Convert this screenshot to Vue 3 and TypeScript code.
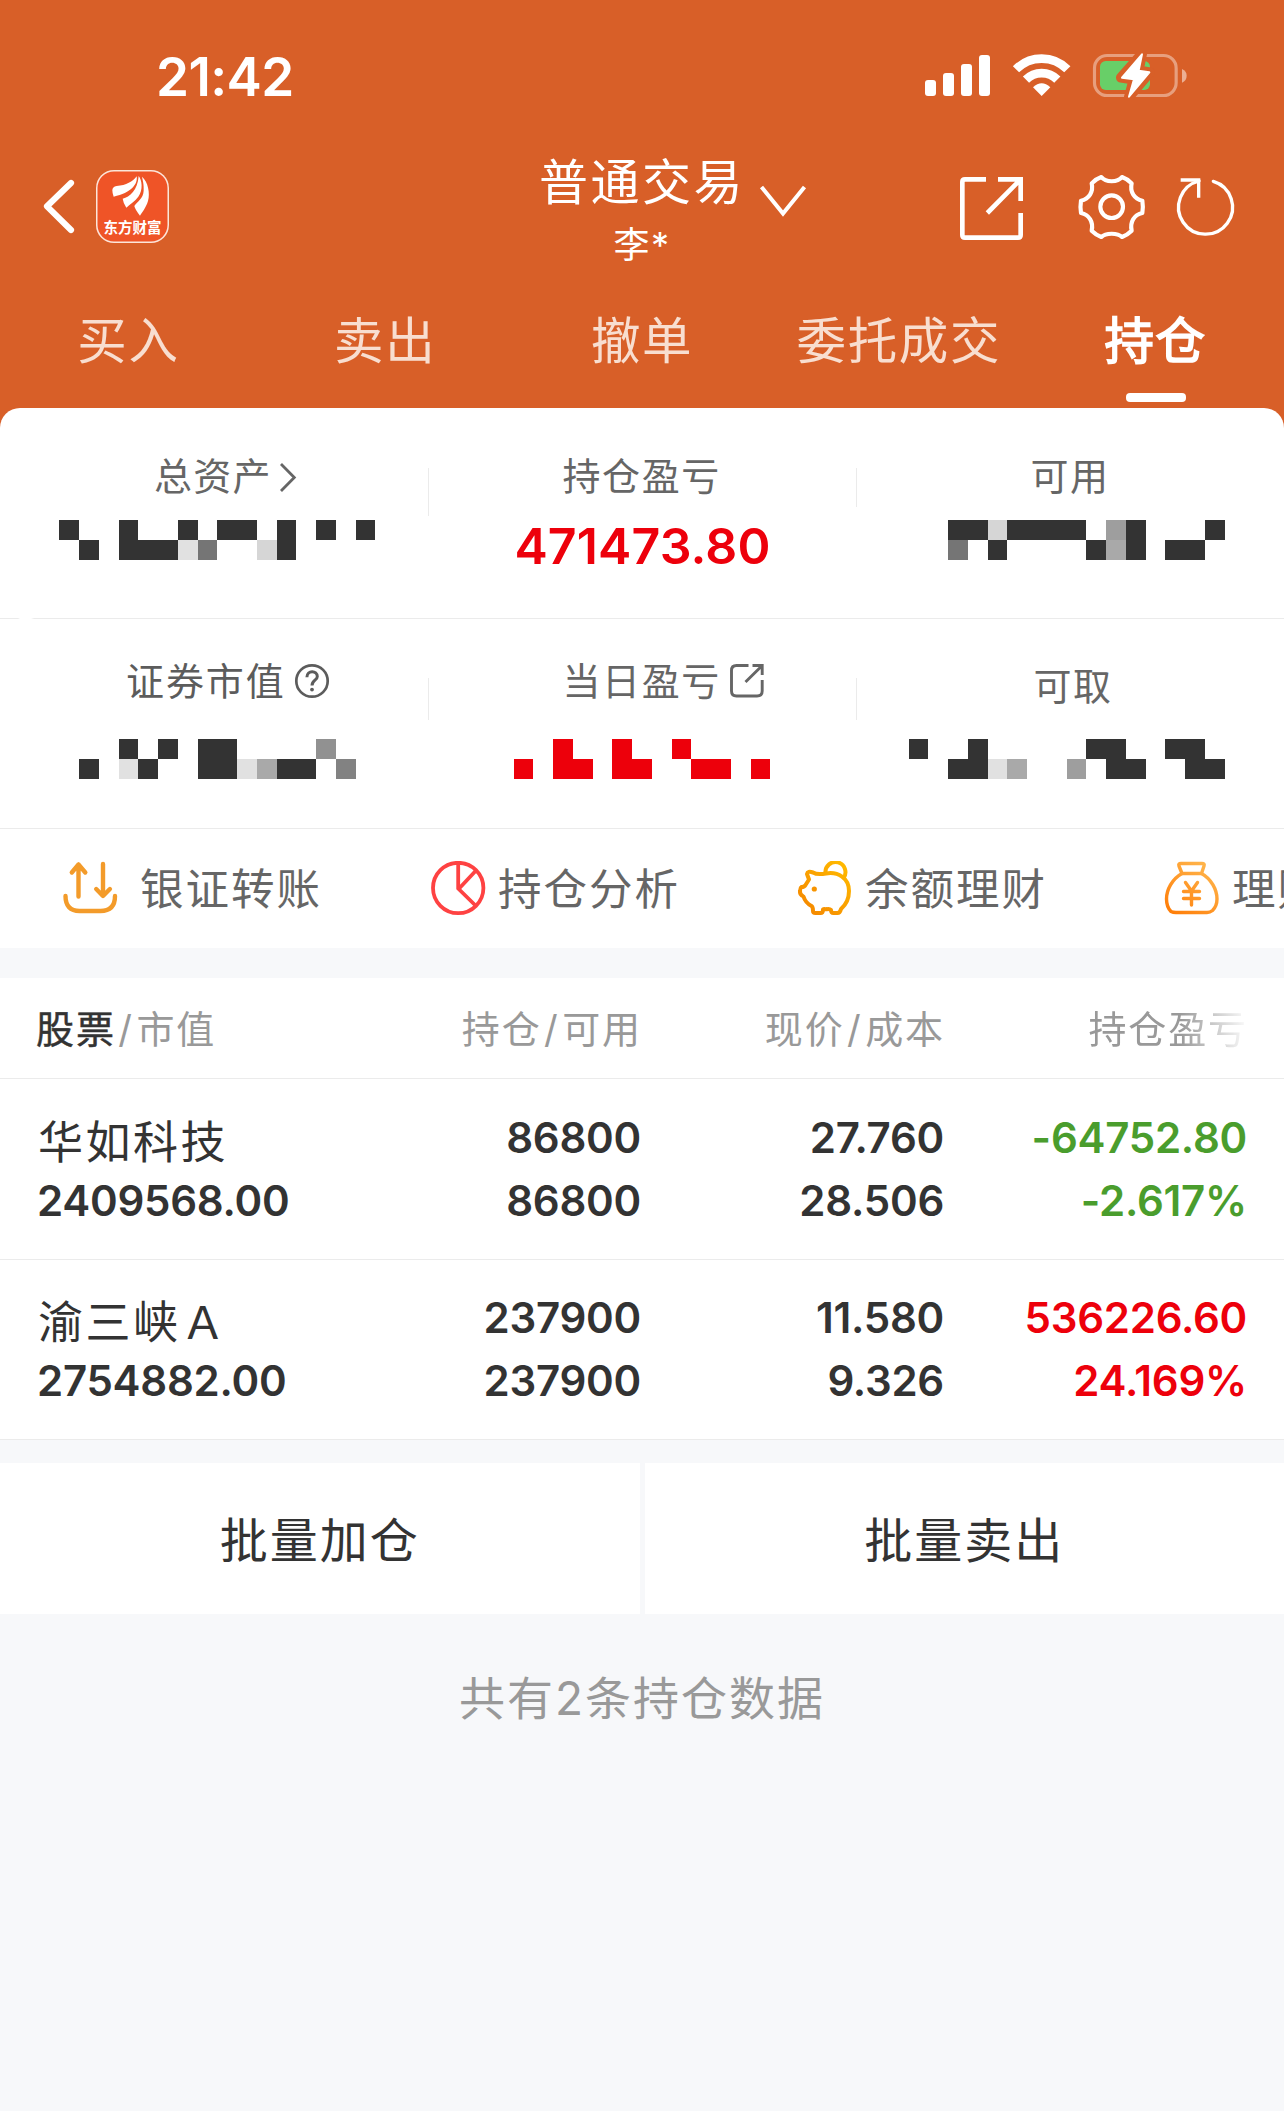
<script setup lang="ts">
type Block = [col: number, span: number, color?: string]
interface Mosaic {
  origin: number
  top: Block[]
  bottom: Block[]
}
interface Holding {
  name: string
  value: string
  qty: string
  usable: string
  price: string
  cost: string
  profit: string
  rate: string
  trend: 'up' | 'down'
}

const STEP = 19.753
const DARK = '#333333'
const RED = '#ed000b'

const tabs: string[] = ['买入', '卖出', '撤单', '委托成交', '持仓']
const activeTab = '持仓'

const totalAssets: Mosaic = {
  origin: 0,
  top: [[3, 1], [6, 1], [9, 1], [11, 2], [14, 1], [16, 1], [18, 1]],
  bottom: [[4, 1], [6, 3], [9, 1, '#e1e1e1'], [10, 1, '#757575'], [13, 1, '#d6d6d6'], [14, 1]],
}
const available: Mosaic = {
  origin: 857,
  top: [[48, 2], [50, 1, '#d6d6d6'], [51, 4], [56, 1, '#9e9e9e'], [57, 1], [61, 1]],
  bottom: [[48, 1, '#757575'], [50, 1], [55, 1], [56, 1, '#a9a9a9'], [57, 1], [59, 2]],
}
const marketValue: Mosaic = {
  origin: 0,
  top: [[6, 1], [8, 1], [10, 2], [16, 1, '#919191']],
  bottom: [[4, 1], [6, 1, '#e1e1e1'], [7, 1], [10, 2], [12, 1, '#e1e1e1'], [13, 1, '#a9a9a9'], [14, 2], [17, 1, '#828282']],
}
const dayProfit: Mosaic = {
  origin: 429,
  top: [[28, 1, RED], [31, 1, RED], [34, 1, RED]],
  bottom: [[26, 1, RED], [28, 2, RED], [31, 2, RED], [35, 2, RED], [38, 1, RED]],
}
const withdrawable: Mosaic = {
  origin: 857,
  top: [[46, 1], [49, 1], [55, 2], [59, 2]],
  bottom: [[48, 2], [50, 1, '#e1e1e1'], [51, 1, '#a9a9a9'], [54, 1, '#9e9e9e'], [56, 2], [60, 2]],
}

function rects(m: Mosaic) {
  const place = (list: Block[], y: number) =>
    list.map(([col, span, color]) => {
      const x = Math.round(col * STEP)
      return { x: x - m.origin, y, w: Math.round((col + span) * STEP) - x, fill: color ?? DARK }
    })
  return [...place(m.top, 0), ...place(m.bottom, 20)]
}

const holdings: Holding[] = [
  { name: '华如科技', value: '2409568.00', qty: '86800', usable: '86800', price: '27.760', cost: '28.506', profit: '-64752.80', rate: '-2.617%', trend: 'down' },
  { name: '渝三峡Ａ', value: '2754882.00', qty: '237900', usable: '237900', price: '11.580', cost: '9.326', profit: '536226.60', rate: '24.169%', trend: 'up' },
]
</script>

<template>
  <div class="app">
    <header class="header">
      <div class="status">
        <span class="time">21:42</span>
        <svg class="status-icons" viewBox="189 63 800 147" width="266.67" height="49">
          <g fill="#fff">
            <rect x="195" y="150" width="33" height="48" rx="9" />
            <rect x="249" y="129" width="33" height="69" rx="9" />
            <rect x="303" y="102" width="33" height="96" rx="9" />
            <rect x="357" y="75" width="33" height="123" rx="9" />
            <path d="M545 198 L519 172 Q545 147 571 172 Z" />
          </g>
          <g fill="none" stroke="#fff" stroke-width="26">
            <path d="M468 118 A108 108 0 0 1 622 118" />
            <path d="M498 149 A66 66 0 0 1 592 149" />
          </g>
          <rect x="703.5" y="76.500" width="245" height="120" rx="38" fill="none" stroke="#fff" stroke-opacity=".4" stroke-width="9.500" />
          <path d="M966 117 Q980 123 980 137 Q980 152 966 158 Z" fill="#fff" fill-opacity=".5" />
          <rect x="720" y="93" width="150" height="87" rx="17" fill="#68cf68" />
          <path d="M846 71 L783 143 L821 149 L807 201 L870 127 L836 121 Z" fill="#d85f28" stroke="#d85f28" stroke-width="30" stroke-linejoin="round" />
          <path d="M846 73 L786 143 L822 148 L807 200 L868 127 L836 122 Z" fill="#fff" stroke="#fff" stroke-width="6" stroke-linejoin="round" />
        </svg>
      </div>

      <nav class="nav">
        <svg class="back" viewBox="126 444 102 171" width="34" height="57">
          <path d="M213 459 L141 529 L213 600" fill="none" stroke="#fff" stroke-width="18.500" stroke-linecap="round" stroke-linejoin="round" />
        </svg>
        <div class="logo">
          <svg viewBox="289 420 218 144" width="72.67" height="48">
            <g fill="#fff">
              <path d="M338 481 Q338 470 351 468 C380 466 399 455 411 439 C415 462 395 489 342 500 Q338 490 338 481Z" />
              <path d="M417 438 C427 450 431 480 416 500 C406 514 390 522 380 533 Q371 520 369 506 C390 501 414 480 417 438Z" />
              <path d="M427 440 C445 455 452 490 445 513 C439 533 428 546 421 557 Q406 538 404 528 C412 514 431 507 432 482 C433 462 429 450 427 440Z" />
            </g>
          </svg>
          <span class="logo-text">东方财富</span>
        </div>
        <div class="title-block">
          <div class="title">普通交易</div>
          <div class="subtitle">李*</div>
        </div>
        <svg class="chevron" viewBox="0 0 48 34" width="48" height="34">
          <path d="M2.500 3 L24 29.500 L45.500 3" fill="none" stroke="#fff" stroke-width="4" />
        </svg>
        <svg class="nav-icons" viewBox="294 429 840 204" width="280" height="68">
          <g fill="none" stroke="#fff" stroke-width="14">
            <path d="M378 448 H315 Q307 448 307 456 V615 Q307 623 315 623 H474 Q482 623 482 615 V549" />
            <path d="M414 448 H482 V513 M382 549 L480 450" />
          </g>
          <g fill="none" stroke="#fff" stroke-width="12.500" stroke-linejoin="round">
            <path d="M724 441 C737 458 773 458 786 441 Q803 447 815 460 C809 486 823 507 847 512 Q850 530 847 549 C823 554 809 575 815 602 Q803 614 786 621 C773 608 737 608 724 621 Q707 614 695 602 C701 575 687 554 663 549 Q660 530 663 512 C687 507 701 486 695 460 Q707 447 724 441Z" />
            <circle cx="755" cy="530" r="34" />
          </g>
          <g fill="none" stroke="#fff" stroke-width="10">
            <path d="M1060 454 A81 81 0 1 1 1017 453" stroke-linecap="round" />
            <path d="M962 450 H1016 V503" />
          </g>
        </svg>
      </nav>

      <div class="tabs">
        <div v-for="t in tabs" :key="t" class="tab" :class="{ active: t === activeTab }">
          <span class="tab-text">{{ t }}</span>
          <i class="tab-bar"></i>
        </div>
      </div>
    </header>

    <div class="card-wrap">
      <section class="card">
        <div class="sum-row first">
          <div class="cell c1">
            <div class="label l-assets">
              <span>总资产</span>
              <svg class="arrow" viewBox="0 0 18 32" width="18" height="32">
                <path d="M2 3 L15.300 16.500 L2 30" fill="none" stroke="#666" stroke-width="2.800" />
              </svg>
            </div>
            <svg class="mosaic" width="428" height="40" shape-rendering="crispEdges">
              <rect v-for="(r, i) in rects(totalAssets)" :key="i" :x="r.x" :y="r.y" :width="r.w" height="20" :fill="r.fill" />
            </svg>
          </div>
          <i class="vline v48"></i>
          <div class="cell c2">
            <div class="label l-mid"><span>持仓盈亏</span></div>
            <div class="amount">471473.80</div>
          </div>
          <i class="vline v39"></i>
          <div class="cell c3">
            <div class="label l-avail"><span>可用</span></div>
            <svg class="mosaic" width="427" height="40" shape-rendering="crispEdges">
              <rect v-for="(r, i) in rects(available)" :key="i" :x="r.x" :y="r.y" :width="r.w" height="20" :fill="r.fill" />
            </svg>
          </div>
        </div>
        <div class="hline gap"></div>
        <div class="sum-row second">
          <div class="cell c1">
            <div class="label l-market">
              <span>证券市值</span>
              <svg class="help" viewBox="0 0 36 36" width="36" height="36" fill="none" stroke="#5c5c5c" stroke-width="2.700">
                <circle cx="18" cy="18" r="15.700" />
                <path d="M12.900 14.200 C13 6.800 23.300 7 23.300 13.500 C23.300 17.300 18 17.300 18 22.500" stroke-width="3" />
                <circle cx="18" cy="26.600" r="1.900" fill="#5c5c5c" stroke="none" />
              </svg>
            </div>
            <svg class="mosaic" width="428" height="40" shape-rendering="crispEdges">
              <rect v-for="(r, i) in rects(marketValue)" :key="i" :x="r.x" :y="r.y" :width="r.w" height="20" :fill="r.fill" />
            </svg>
          </div>
          <i class="vline v42"></i>
          <div class="cell c2">
            <div class="label l-mid">
              <span>当日盈亏</span>
              <svg class="ext" viewBox="0 0 36 36" width="36" height="36" fill="none" stroke="#666" stroke-width="2.900">
                <path d="M19.500 2.500 H7.500 Q2.500 2.500 2.500 7.500 V28 Q2.500 33 7.500 33 H28 Q33.200 33 33.200 28 V17" />
                <path d="M23.500 2.500 H33.200 V12 M33 2.700 L16.500 19" />
              </svg>
            </div>
            <svg class="mosaic" width="427" height="40" shape-rendering="crispEdges">
              <rect v-for="(r, i) in rects(dayProfit)" :key="i" :x="r.x" :y="r.y" :width="r.w" height="20" :fill="r.fill" />
            </svg>
          </div>
          <i class="vline v42"></i>
          <div class="cell c3">
            <div class="label l-draw"><span>可取</span></div>
            <svg class="mosaic" width="427" height="40" shape-rendering="crispEdges">
              <rect v-for="(r, i) in rects(withdrawable)" :key="i" :x="r.x" :y="r.y" :width="r.w" height="20" :fill="r.fill" />
            </svg>
          </div>
        </div>
        <div class="hline"></div>

        <div class="actions">
          <div class="action wide">
            <svg viewBox="0 0 56 56" width="56" height="56" fill="none" stroke="#f39b2a" stroke-width="4.400" stroke-linecap="round" stroke-linejoin="round">
              <path d="M2.500 35 Q2.500 50 16.500 50 H37.500 Q52 50 52 35" />
              <path d="M15.500 35.500 V3.500 M8.800 11.500 L15.500 3.500 L22.300 11.500" />
              <path d="M40 3 V34.500 M33.200 28 L40 35 L46.900 28" />
            </svg>
            <span>银证转账</span>
          </div>
          <div class="action">
            <svg viewBox="0 0 56 56" width="56" height="56" fill="none" stroke="#fe4242" stroke-width="3.800">
              <circle cx="28.200" cy="27" r="25.200" />
              <path d="M28.200 2 V27.500 L46 45 M28.200 28.500 L46 9.500" />
            </svg>
            <span>持仓分析</span>
          </div>
          <div class="action">
            <svg viewBox="0 0 56 56" width="56" height="56" fill="none" stroke="url(#pig)" stroke-width="4" stroke-linejoin="round">
              <defs>
                <linearGradient id="pig" gradientUnits="userSpaceOnUse" x1="8" y1="46" x2="46" y2="4">
                  <stop offset="0" stop-color="#f58a00" />
                  <stop offset="1" stop-color="#ffb800" />
                </linearGradient>
              </defs>
              <path d="M16 11.500 Q10.500 9.500 10 13 L12 18.500 L8.500 24 Q7.500 26 4.500 26 Q3 27 3 30 Q2.500 34 6.500 35.500 Q8.500 42 14.500 45 Q16 46 16 50 Q16 52 18.500 52 H23.500 Q26 52 26 48.500 Q27 47.500 29.500 48.300 Q32.500 47.500 34 49 Q34 52 36.500 52 H40.500 Q43 52 44 48 Q52 41 52 30 C52 17 41 10.500 29 12.500 Q20 14 16 11.500Z" />
              <path d="M28.500 12 A10 10 0 1 1 46.500 17" />
              <circle cx="17.300" cy="28" r="2.600" fill="#f79400" stroke="none" />
            </svg>
            <span>余额理财</span>
          </div>
          <div class="action">
            <svg viewBox="0 0 56 56" width="56" height="56" fill="none" stroke="url(#bag)" stroke-width="3.400" stroke-linejoin="round" stroke-linecap="round">
              <defs>
                <linearGradient id="bag" gradientUnits="userSpaceOnUse" x1="10" y1="52" x2="46" y2="4">
                  <stop offset="0" stop-color="#ff7f0a" />
                  <stop offset="1" stop-color="#ffb64d" />
                </linearGradient>
              </defs>
              <path d="M17 2.500 H38 Q41 2.500 40 5 L37.500 12.500 H18 L15 5 Q14 2.500 17 2.500Z" />
              <path d="M18 12.500 C8 18 2.500 29 2.500 38 Q2.500 46 7 50.500 Q9 51.500 12 51.500 H43 Q46 51.500 48.500 49.500 Q53 45 53 38 C53 29 47.500 18 37.500 12.500" />
              <path d="M21.500 21.500 L27.500 30 L33.500 21.500 M27.500 30 V44 M19.500 30.500 H35.500 M19.500 37.500 H35.500" />
            </svg>
            <span>理财</span>
          </div>
        </div>
      </section>
    </div>

    <section class="table">
      <div class="thead">
        <div class="th left"><b>股票</b><i>/</i>市值</div>
        <div class="th">持仓<i>/</i>可用</div>
        <div class="th">现价<i>/</i>成本</div>
        <div class="th fade">持仓盈亏</div>
      </div>
      <div v-for="h in holdings" :key="h.name" class="trow">
        <div class="td left"><span class="name">{{ h.name }}</span><span>{{ h.value }}</span></div>
        <div class="td"><span>{{ h.qty }}</span><span>{{ h.usable }}</span></div>
        <div class="td"><span>{{ h.price }}</span><span>{{ h.cost }}</span></div>
        <div class="td" :class="h.trend"><span>{{ h.profit }}</span><span>{{ h.rate }}</span></div>
      </div>
    </section>

    <div class="batch">
      <div class="batch-btn">批量加仓</div>
      <div class="batch-btn">批量卖出</div>
    </div>

    <div class="footer">共有2条持仓数据</div>
  </div>
</template>

<style>
body {
  background: #f7f8fa;
}
</style>

<style scoped>
.app {
  width: 1284px;
  height: 2111px;
  overflow: hidden;
  background: #f7f8fa;
  font-family: Inter, "Noto Sans CJK SC", sans-serif;
  color: #333;
  white-space: nowrap;
}
.app svg {
  display: block;
  flex: none;
}
.header {
  height: 408px;
  background: #d85f28;
  color: #fff;
}
.status {
  display: flex;
  align-items: flex-start;
  justify-content: space-between;
  height: 130px;
  box-sizing: border-box;
  padding: 51px 94.300px 0 156px;
}
.time {
  font-size: 53px;
  font-weight: 600;
  line-height: 52px;
  letter-spacing: -0.600px;
}
.nav {
  display: flex;
  align-items: flex-start;
  height: 160px;
}
.back {
  margin: 48px 0 0 42px;
}
.logo {
  display: flex;
  flex-direction: column;
  align-items: center;
  width: 73px;
  height: 73px;
  margin: 40px 0 0 20px;
  border-radius: 18px;
  background: #ef5427;
  box-shadow: inset 0 0 0 1.500px #fbe6da;
}
.logo-text {
  font-family: "Noto Sans CJK SC", sans-serif;
  font-size: 14.500px;
  font-weight: 700;
  line-height: 17px;
}
.title-block {
  width: 208px;
  margin: 20px 0 0 369px;
  text-align: center;
}
.title {
  font-size: 49px;
  line-height: 65px;
  letter-spacing: 2.500px;
}
.subtitle {
  font-size: 36px;
  line-height: 60px;
  letter-spacing: 1.500px;
}
.chevron {
  margin: 54px 0 0 13px;
}
.nav-icons {
  margin: 43px 0 0 151px;
}
.tabs {
  display: flex;
  height: 118px;
}
.tab {
  flex: 1;
  display: flex;
  flex-direction: column;
  align-items: center;
  font-size: 49.500px;
  letter-spacing: 1.600px;
}
.tab-text {
  line-height: 103px;
  color: #f8ded0;
}
.active .tab-text {
  color: #fff;
  -webkit-text-stroke: 1.700px #fff;
}
.tab-bar {
  width: 60px;
  height: 9px;
  border-radius: 4px;
}
.active .tab-bar {
  background: #fff;
}
.card-wrap {
  background: #d85f28;
}
.card {
  height: 540px;
  border-radius: 20px 20px 0 0;
  background: #fff;
  overflow: hidden;
}
.sum-row {
  display: flex;
}
.first {
  height: 210px;
}
.second {
  height: 209px;
}
.cell {
  flex: none;
}
.c1 {
  width: 428px;
}
.c2,
.c3 {
  width: 427px;
}
.label {
  display: flex;
  align-items: center;
  height: 44px;
  padding-top: 46px;
  font-size: 38px;
  line-height: 44px;
  letter-spacing: 1.600px;
  color: #666;
}
.second .label {
  padding-top: 40px;
}
.first .mosaic,
.first .amount {
  margin-top: 22px;
}
.second .mosaic {
  margin-top: 36px;
}
.l-assets {
  padding-left: 154px;
  letter-spacing: 1.300px;
}
.l-market {
  padding-left: 126px;
  letter-spacing: 1.900px;
  color: #5c5c5c;
}
.l-mid {
  padding-left: 133.500px;
}
.l-avail {
  padding-left: 173.500px;
}
.second .l-draw {
  padding-left: 176.500px;
  padding-top: 45px;
  margin-bottom: -5px;
}
.arrow {
  margin: 1px 0 0 7px;
}
.help {
  margin-left: 8px;
}
.ext {
  margin-left: 8px;
}
.amount {
  text-align: center;
  font-size: 50px;
  font-weight: 600;
  line-height: 52px;
  letter-spacing: 0.150px;
  color: #ed000b;
}
.vline {
  flex: none;
  width: 1px;
  background: #ebebeb;
}
.v48 {
  height: 48px;
  margin-top: 60px;
}
.v39 {
  height: 39px;
  margin-top: 60px;
}
.v42 {
  height: 42px;
  margin-top: 59px;
}
.hline {
  height: 1px;
  background: #ebebeb;
}
.hline.gap {
  background: linear-gradient(90deg, #ebebeb 18px, #fff 20px, #fff 31px, #ebebeb 34px);
}
.actions {
  display: flex;
  height: 119px;
  padding-left: 63px;
}
.action {
  flex: none;
  display: flex;
  align-items: center;
  width: 367px;
  font-size: 43.500px;
  letter-spacing: 2px;
  color: #666;
}
.action span {
  margin: -4px 0 0 12px;
}
.action.wide span {
  margin-left: 21px;
}
.table {
  margin-top: 30px;
  background: #fff;
}
.thead,
.trow {
  display: grid;
  grid-template-columns: 264px 342px 303px 303px;
  padding-left: 36px;
  border-bottom: 1px solid #ebebeb;
}
.thead {
  height: 100px;
}
.th {
  text-align: right;
  font-size: 38px;
  line-height: 102px;
  letter-spacing: 1.900px;
  color: #999;
}
.th.left,
.td.left {
  text-align: left;
  align-items: flex-start;
}
.th b {
  font-weight: 400;
  color: #333;
  -webkit-text-stroke: 0.500px #333;
}
.th i {
  font-style: normal;
  margin: 0 2.500px;
}
.th.fade {
  -webkit-mask-image: linear-gradient(90deg, #000 235px, transparent 305px);
  mask-image: linear-gradient(90deg, #000 235px, transparent 305px);
}
.trow {
  height: 179px;
}
.trow:nth-child(2) {
  height: 180px;
}
.trow:nth-child(2) .td {
  padding-top: 27px;
}
.td {
  display: flex;
  flex-direction: column;
  align-items: flex-end;
  padding: 26px 1px 0 0;
  font-size: 42px;
  font-weight: 560;
  line-height: 63px;
  letter-spacing: -0.250px;
}
.td.left {
  padding-left: 1px;
}
.name {
  margin: 5px 0 -5px 1px;
  font-size: 45px;
  font-weight: 400;
  letter-spacing: 2.500px;
}
.up {
  color: #ed000b;
}
.down {
  color: #4a9d2d;
}
.batch {
  display: flex;
  gap: 5px;
  margin-top: 23px;
}
.batch-btn {
  flex: 1;
  height: 151px;
  line-height: 155px;
  text-align: center;
  font-size: 48px;
  letter-spacing: 2px;
  background: #fff;
}
.footer {
  margin-top: 53px;
  line-height: 62px;
  text-align: center;
  font-size: 46px;
  letter-spacing: 2px;
  color: #999;
}
</style>
